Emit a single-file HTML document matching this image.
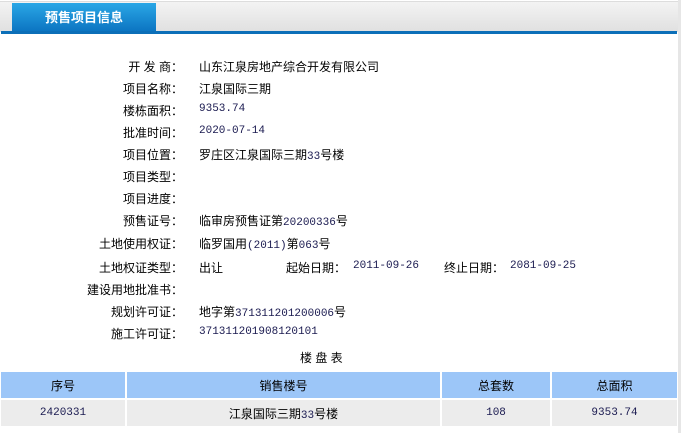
<!DOCTYPE html>
<html><head><meta charset="utf-8"><style>
body{margin:0;width:681px;height:433px;background:#fff;position:relative;overflow:hidden;font-family:"Liberation Sans","Noto Sans CJK SC",sans-serif;font-size:12px;color:#000}
.top{position:absolute;left:0;top:1px;width:678px;height:30px;background:linear-gradient(#f3f3f3,#e0e0e0);border-top:1px solid #ddd}
.blue{position:absolute;left:1px;top:31px;width:676px;height:3px;background:#0c6fb8}
.rb{position:absolute;left:678px;top:0;width:3px;height:433px;background:#e6e6e6}
.tab{position:absolute;left:12px;top:3px;width:144px;height:28px;background:linear-gradient(#2aa7e6,#0c75c2);color:#fff;font-weight:bold;font-size:13px;line-height:30px;text-align:center}
.l{position:absolute;right:498px;white-space:nowrap}
.v{position:absolute;left:199px;white-space:nowrap}
.n{font-family:"Liberation Mono",monospace;font-size:11px;color:#1a1a50}
table{position:absolute;left:0;top:370px;width:680px;border-collapse:separate;border-spacing:2px;margin-left:-1px}
td{text-align:center;height:26px;padding:0}
tr.h td{background:#9cc6f8;font-size:12px}
tr.r td{background:#ececec}
</style></head><body>
<div class="top"></div><div class="blue"></div><div class="rb"></div>
<div class="tab">预售项目信息</div>
<div class="l" style="top:58px">开 发 商：</div><div class="v" style="top:58px">山东江泉房地产综合开发有限公司</div>
<div class="l" style="top:80px">项目名称：</div><div class="v" style="top:80px">江泉国际三期</div>
<div class="l" style="top:102px">楼栋面积：</div><div class="v n" style="top:103px">9353.74</div>
<div class="l" style="top:124px">批准时间：</div><div class="v n" style="top:125px">2020-07-14</div>
<div class="l" style="top:146px">项目位置：</div><div class="v" style="top:146px">罗庄区江泉国际三期<span class="n">33</span>号楼</div>
<div class="l" style="top:168px">项目类型：</div>
<div class="l" style="top:190px">项目进度：</div>
<div class="l" style="top:212px">预售证号：</div><div class="v" style="top:212px">临审房预售证第<span class="n">20200336</span>号</div>
<div class="l" style="top:235px">土地使用权证：</div><div class="v" style="top:235px">临罗国用<span class="n">(2011)</span>第<span class="n">063</span>号</div>
<div class="l" style="top:259px">土地权证类型：</div><div class="v" style="top:259px">出让</div>
<div class="v" style="top:259px;left:286px">起始日期：</div><div class="v n" style="top:260px;left:353px">2011-09-26</div>
<div class="v" style="top:259px;left:444px">终止日期：</div><div class="v n" style="top:260px;left:510px">2081-09-25</div>
<div class="l" style="top:281px">建设用地批准书：</div>
<div class="l" style="top:303px">规划许可证：</div><div class="v" style="top:303px">地字第<span class="n">371311201200006</span>号</div>
<div class="l" style="top:325px">施工许可证：</div><div class="v n" style="top:326px">371311201908120101</div>
<div style="position:absolute;left:300px;top:349px">楼 盘 表</div>
<table>
<tr class="h"><td style="width:124px">序号</td><td style="width:313px">销售楼号</td><td style="width:108px">总套数</td><td>总面积</td></tr>
<tr class="r"><td class="n">2420331</td><td>江泉国际三期<span class="n">33</span>号楼</td><td class="n">108</td><td class="n">9353.74</td></tr>
</table>
</body></html>
